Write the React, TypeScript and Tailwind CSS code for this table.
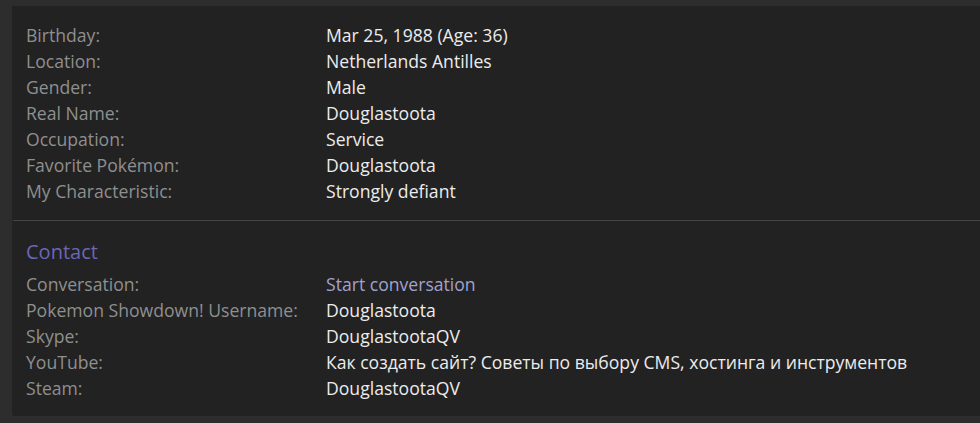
const about: [string, string][] = [
  ["Birthday:", "Mar 25, 1988 (Age: 36)"],
  ["Location:", "Netherlands Antilles"],
  ["Gender:", "Male"],
  ["Real Name:", "Douglastoota"],
  ["Occupation:", "Service"],
  ["Favorite Pokémon:", "Douglastoota"],
  ["My Characteristic:", "Strongly defiant"],
];

const contact: { label: string; value: string; link?: boolean }[] = [
  { label: "Conversation:", value: "Start conversation", link: true },
  { label: "Pokemon Showdown! Username:", value: "Douglastoota" },
  { label: "Skype:", value: "DouglastootaQV" },
  { label: "YouTube:", value: "Как создать сайт? Советы по выбору CMS, хостинга и инструментов" },
  { label: "Steam:", value: "DouglastootaQV" },
];

function Row({ label, value, link }: { label: string; value: string; link?: boolean }) {
  return (
    <div className="grid grid-cols-[300px_1fr] h-[26px] items-center whitespace-nowrap">
      <span className="text-[#8f8f8f]">{label}</span>
      <span className={link ? "text-[#a3a1cf]" : "text-[#ececec]"}>{value}</span>
    </div>
  );
}

export default function App() {
  return (
    <div
      className="w-[980px] h-[423px] bg-[#2d2d2d] pt-[6px] pl-[12px] overflow-hidden text-[17.6px] leading-[26px]"
      style={{ fontFamily: '"Open Sans", "Noto Sans", sans-serif' }}
    >
      <div className="bg-[#222222] rounded-bl-[3px] h-[410px]">
        {/* about */}
        <div className="pt-[16px] pb-[16px] px-[14px]">
          {about.map(([l, v]) => (
            <Row key={l} label={l} value={v} />
          ))}
        </div>

        <div className="h-px bg-[#454545] ml-px" />

        {/* contact */}
        <div className="pt-[15px] px-[14px]">
          <h3 className="text-[20px] leading-[32px] text-[#6b66b8] mb-[3px]">Contact</h3>
          {contact.map((c) => (
            <Row key={c.label} {...c} />
          ))}
        </div>
      </div>
    </div>
  );
}
